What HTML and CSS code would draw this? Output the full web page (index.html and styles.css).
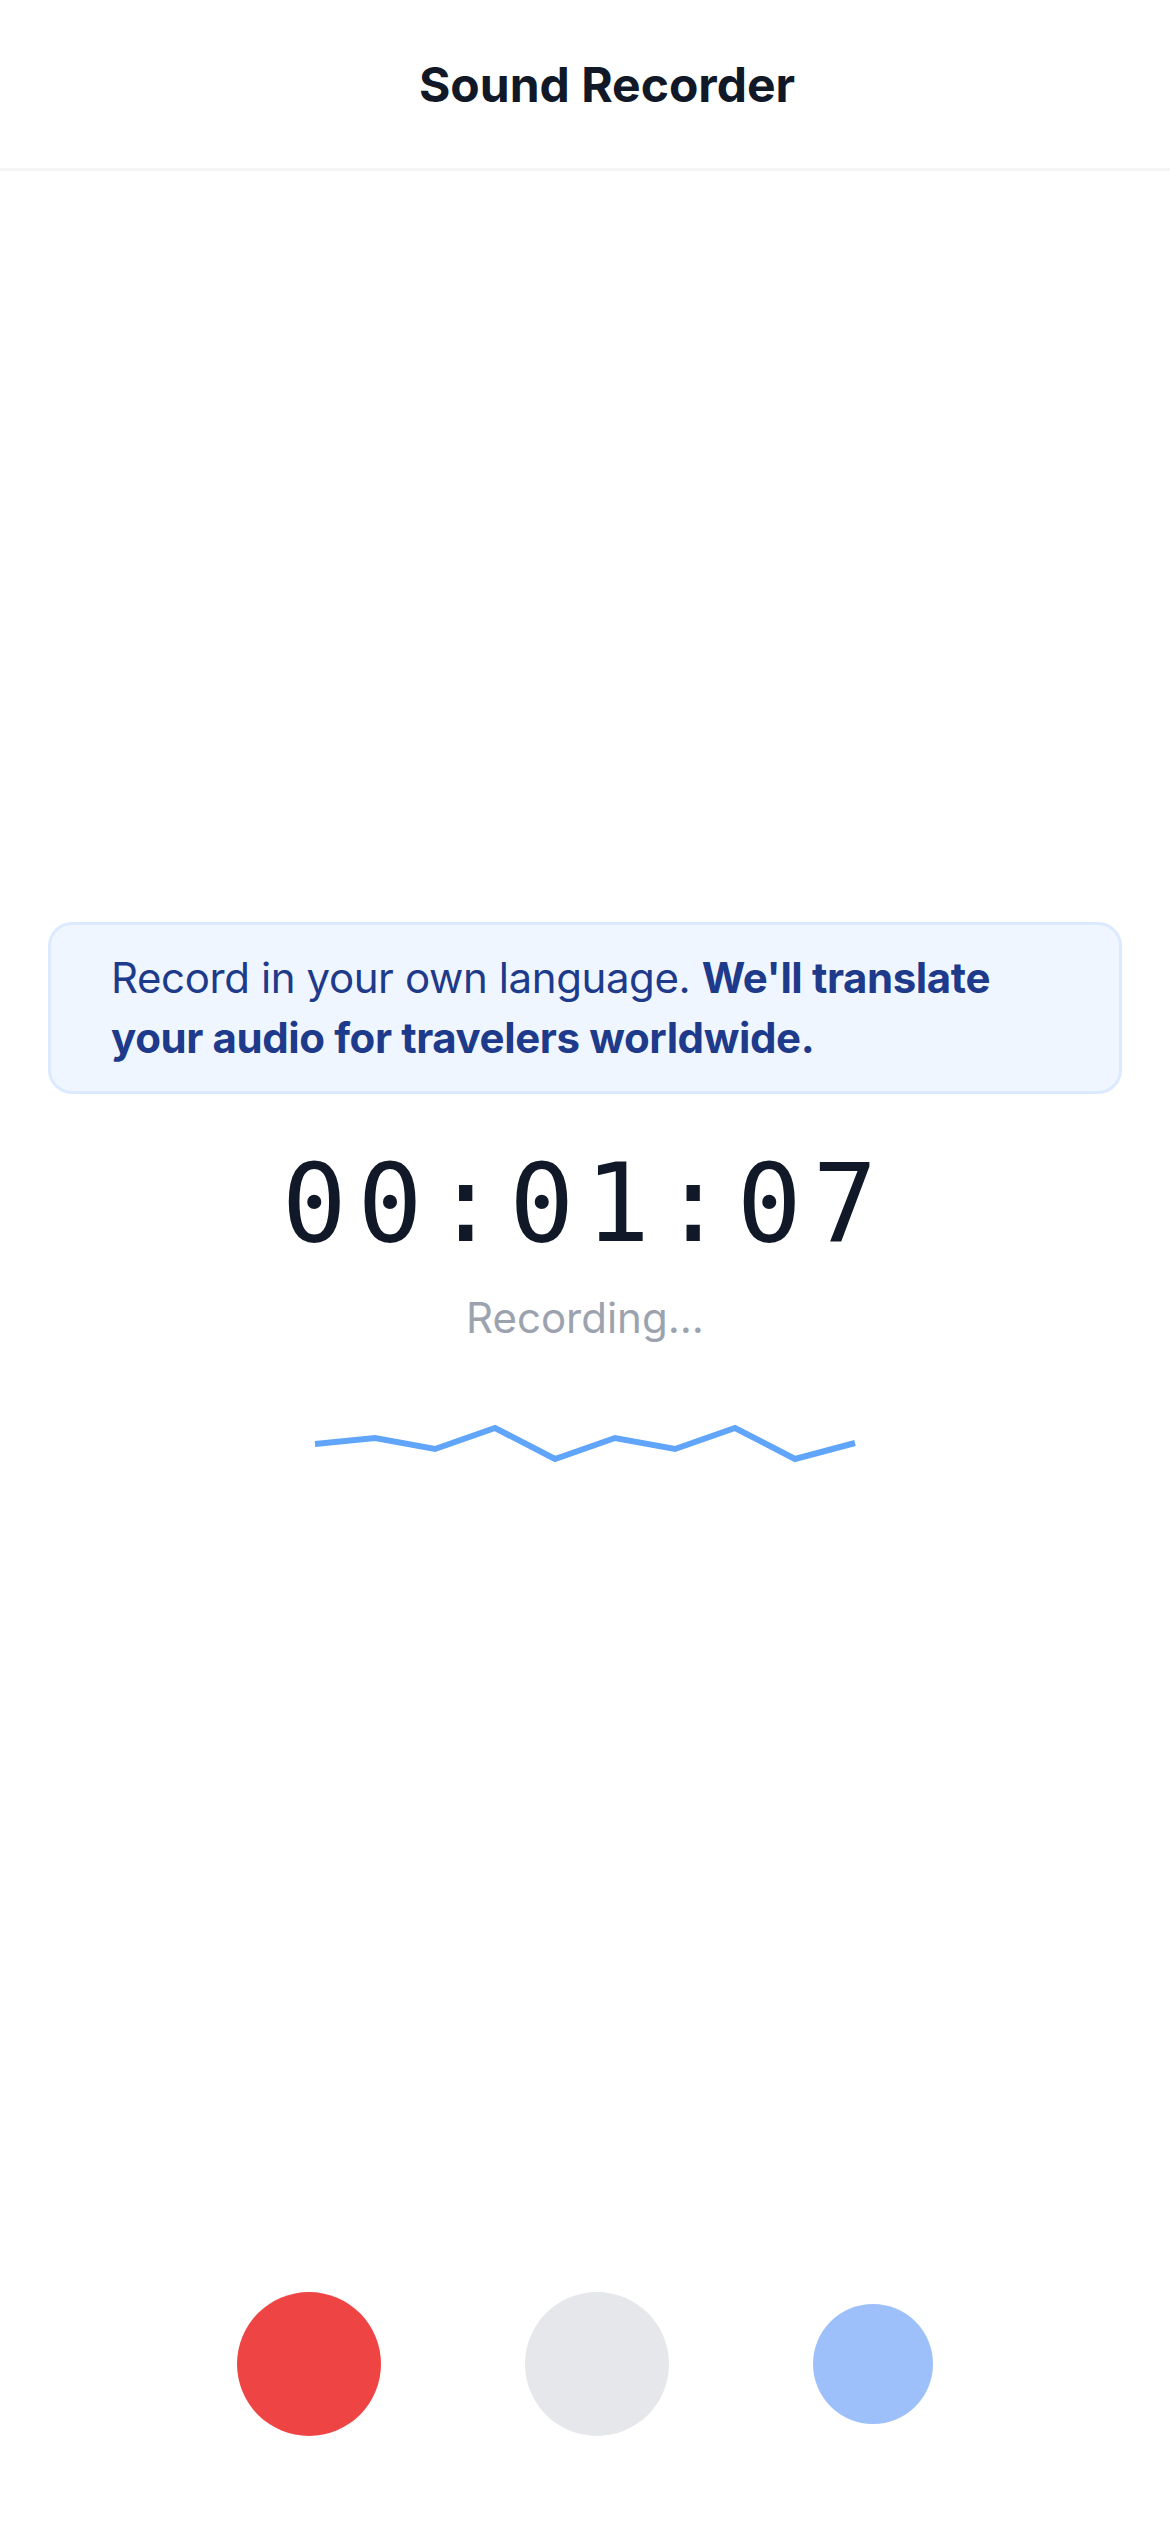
FILE: index.html
```html
<!DOCTYPE html>
<html lang="en">
<head>
<meta charset="utf-8">
<title>Sound Recorder</title>
<link rel="stylesheet" href="styles.css">
</head>
<body>
<div class="app">
  <header class="topbar">
    <h1 class="title">Sound Recorder</h1>
  </header>
  <main class="main">
    <div class="notice">
      <p>Record in your own language. <strong>We'll translate your audio for travelers worldwide.</strong></p>
    </div>
    <div class="timer">00:01:07</div>
    <div class="status">Recording...</div>
    <svg class="wave" width="552" height="60" viewBox="0 0 552 60" aria-hidden="true">
      <polyline points="6,30 66,24 126,35 186,14 246,45 306,24 366,35 426,14 486,45 546,29" fill="none" stroke="#60a5fa" stroke-width="6" stroke-linejoin="miter"/>
    </svg>
  </main>
  <footer class="controls">
    <button class="btn btn-record" aria-label="Record"></button>
    <button class="btn btn-pause" aria-label="Pause"></button>
    <button class="btn btn-stop" aria-label="Stop"></button>
  </footer>
</div>
</body>
</html>
```

FILE: styles.css
```css
* { box-sizing: border-box; }
html, body { margin: 0; padding: 0; }
body {
  background: #ffffff;
  font-family: Inter, "Noto Sans", "Liberation Sans", sans-serif;
  color: #111827;
}
.app {
  width: 1170px;
  height: 2532px;
  display: flex;
  flex-direction: column;
}
.topbar {
  height: 171px;
  border-bottom: 3px solid #f3f4f6;
  display: flex;
  align-items: center;
  justify-content: center;
  padding-left: 44px;
}
.title {
  margin: 0;
  font-size: 48px;
  font-weight: 700;
  color: #111827;
}
.main {
  flex: 1;
  display: flex;
  flex-direction: column;
  align-items: center;
  padding: 751px 48px 0;
}
.notice {
  width: 100%;
  background: #eff6ff;
  border: 3px solid #dbeafe;
  border-radius: 24px;
  padding: 23px 60px;
  color: #1e3a8a;
  font-size: 42px;
  line-height: 60px;
  letter-spacing: -0.4px;
}
.notice p { margin: 0; }
.notice strong { font-weight: 700; }
.timer {
  margin-top: 50px;
  font-family: "DejaVu Sans Mono", "Liberation Mono", monospace;
  font-feature-settings: "zero" 1;
  font-variant-numeric: slashed-zero;
  font-size: 108px;
  line-height: 120px;
  letter-spacing: 10.8px;
  color: #111827;
}
.status {
  margin-top: 24px;
  font-size: 42px;
  line-height: 60px;
  color: #9ca3af;
}
.wave {
  margin-top: 66px;
  display: block;
}
.controls {
  display: flex;
  justify-content: center;
  align-items: center;
  gap: 144px;
  padding-bottom: 96px;
}
.btn {
  border: none;
  padding: 0;
  border-radius: 50%;
  width: 144px;
  height: 144px;
}
.btn-record { background: #ef4444; }
.btn-pause { background: #e5e7eb; }
.btn-stop { width: 120px; height: 120px; background: rgba(59, 130, 246, 0.5); }
```
